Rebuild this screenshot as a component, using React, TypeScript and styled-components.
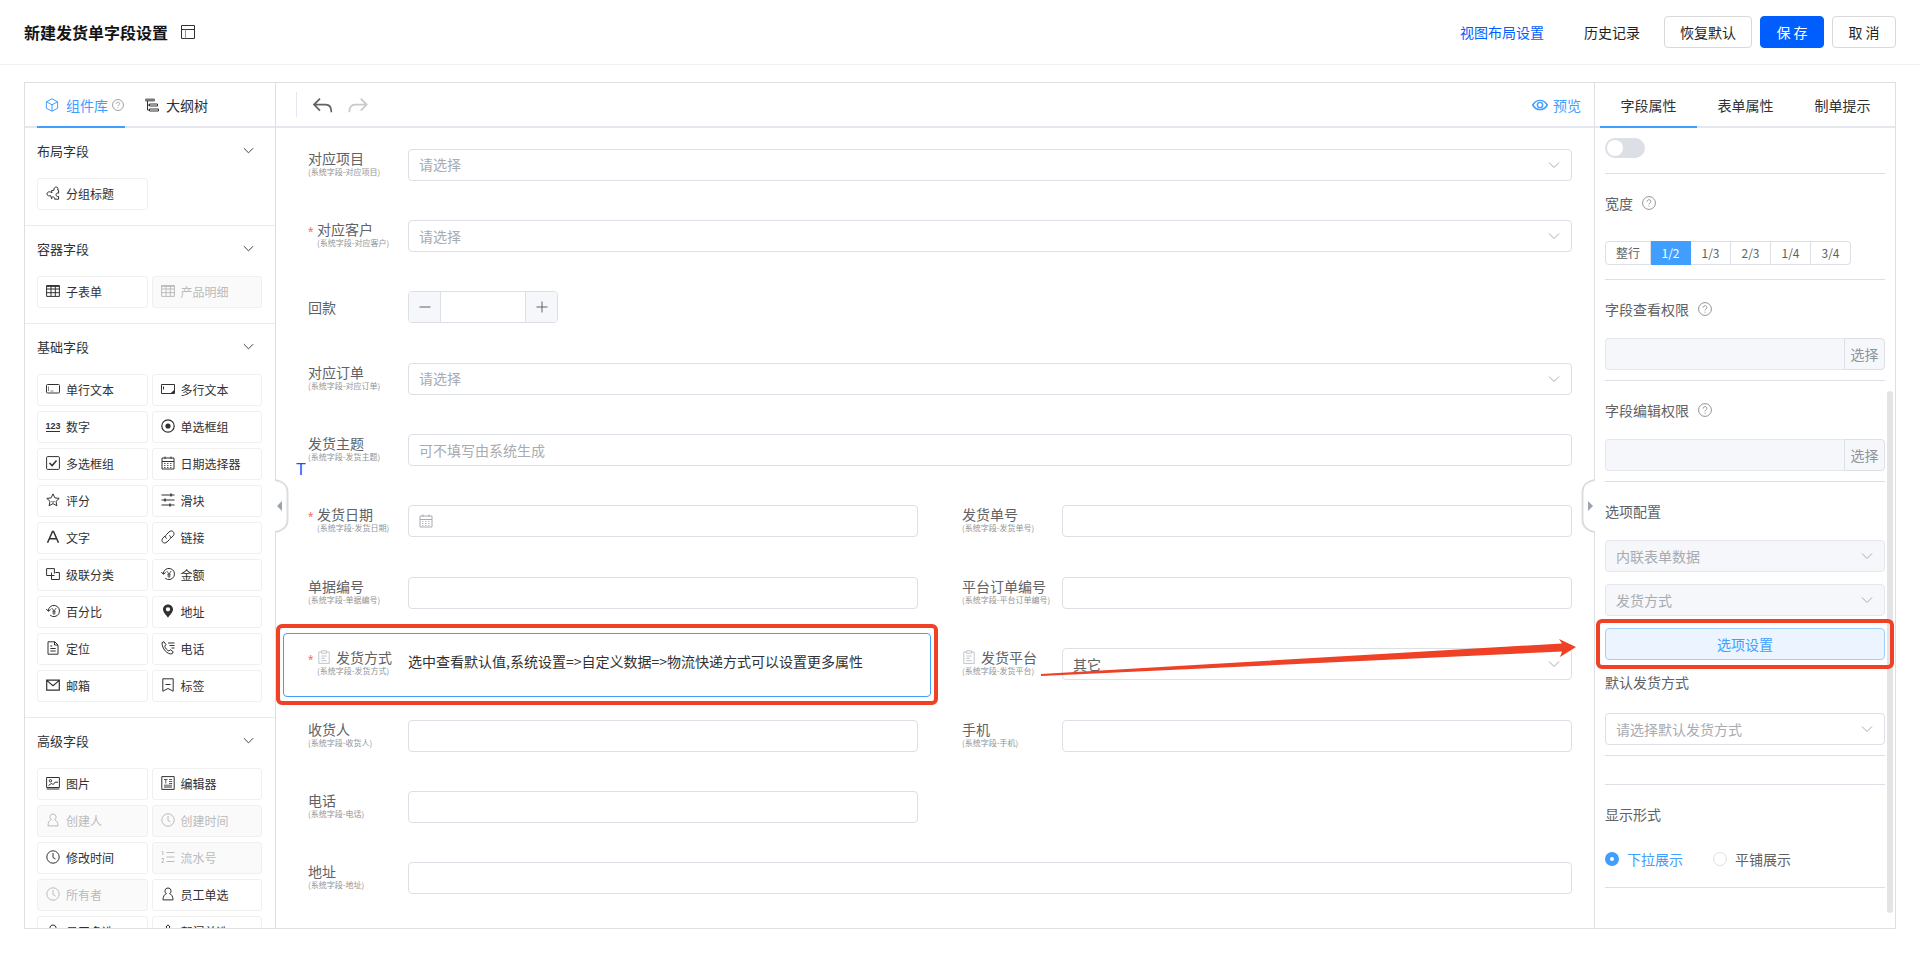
import React from "react";
import styled, { createGlobalStyle, css } from "styled-components";

const GlobalStyle = createGlobalStyle`
  *, *::before, *::after { box-sizing: border-box; }
  body {
    margin: 0;
    background: #fff;
    color: #303133;
    font-family: "Microsoft YaHei", "Noto Sans CJK SC", sans-serif;
    font-size: 14px;
  }
  button, input, select { font-family: inherit; font-size: 14px; margin: 0; }
  button { cursor: pointer; }
`;

const color = {
  primary: "#409eff",
  brand: "#005eff",
  text: "#303133",
  regular: "#606266",
  secondary: "#909399",
  placeholder: "#a8abb2",
  border: "#dcdfe6",
  line: "#dddfe2",
  light: "#f0f0f0",
  rule: "#e4e7ed",
  fill: "#f5f7fa",
  mark: "#ee4126",
};

/* ---------- icons ---------- */

const icons = {
  layout: <><path d="M.5.5h13v13H.5zM.5 4.500h13" /><path d="M4.500 4.500v9" stroke="#d77" /></>,
  cube: <path d="M7 .8l5.600 2.900v6.600L7 13.200l-5.600-2.900V3.700zM1.400 3.700L7 6.800l5.600-3.100M7 6.800v6.400" />,
  help: <><circle cx="7" cy="7" r="6.400" /><path d="M5.100 5.600c0-2.500 3.800-2.500 3.800-.1 0 1.500-1.900 1.500-1.900 2.900M7 9.700v1" /></>,
  tree: <><path d="M.5 1h9v2h-9z" fill="currentColor" opacity=".65" /><path d="M4.500 6h8v2h-8zM4.500 11h9v2h-9zM2.500 3v9h2M2.500 7h2" /></>,
  chevron: <path d="M2 4.500l5 5 5-5" />,
  blocks: <path d="M5.500 4.600L8 4.200C7.600 2 9 1 10.200 1c1.400 0 2.300 1.400 1.400 3l1 .2v3c-1.300-.6-2.600.2-2.600 1.600s1.300 2 2.600 1.500v2.900H8.700c.3-1.500-.7-2.300-1.700-2.300s-1.700.8-1.400 2M5.500 4.600L6 6.900C3.800 5 1 5.800 1 7.900S3.900 10.300 4.600 9.600l1.100 2.900" />,
  table: <><path d="M.6 1.600h12.800v10.800H.6zM.6 5h12.800M.6 8.700h12.800M5 1.600v10.800M9.300 1.600v10.800" /><path d="M.6 2.100h12.800" strokeWidth="1.600" /></>,
  input: <><rect x=".5" y="2.500" width="13" height="8.500" rx="1" /><path d="M2.500 4.500v4.500M4.500 9h3" opacity=".6" /></>,
  textarea: <><path d="M.5 2.500h13v9H.5zM2.500 4.500v3" /><path d="M13 8.500L10.500 11H13z" fill="currentColor" /></>,
  radio: <><circle cx="7" cy="7" r="6.200" strokeWidth="1.200" /><circle cx="7" cy="7" r="2.600" fill="currentColor" stroke="none" /></>,
  check: <><rect x=".6" y=".6" width="12.800" height="12.800" rx="1" /><path d="M3.500 7l2.700 2.600L10.500 4.500" strokeWidth="1.500" /></>,
  calendar: <><path d="M1 2h12v11H1zM1 5.500h12M4 .5V3M10 .5V3" /><path d="M3 7.500h8M3 9.500h8M3 11.500h8" strokeDasharray="1.500 1.500" strokeWidth=".8" /></>,
  star: <path d="M7 .9l1.900 4 4.300.5-3.200 3 .9 4.400L7 10.600l-3.900 2.200.9-4.400-3.200-3 4.300-.5zM5.500 8.500c1 .7 2 .7 3 0" />,
  slider: <><path d="M.5 2h13M.5 7h13M.5 12h13" strokeWidth="1.200" /><path d="M10 .5v3M4 5.500v3M9 10.500v3" strokeWidth="1.500" /></>,
  letter: <path d="M1.500 12.800L6.500 1.500h1l5 11.300M3.400 8.800h7.200" strokeWidth="1.500" />,
  link: <path d="M5.500 8.700C4 6.800 4.300 5.800 5.300 4.800L8 2c1.300-1.400 3.200-1.300 4.200-.3s1.200 2.900 0 4.100L10 8M8.500 5.300C10 7 9.700 8.300 8.700 9.300L6 12c-1.300 1.300-3.200 1.300-4.200.3s-1.200-2.900 0-4.200L4 6" />,
  cascade: <path d="M5 8.500H.6V1.600h7.800v5M5.500 5.500v7h7.900v-7h-4M5.500 8.500h3" />,
  money: <><path d="M2.300 7a5.600 5.600 0 1 1 1.900 4.200M.3 5l2 2.300L4.700 5.500" /><path d="M5.800 4L8 7l2.200-3M8 7v4M6.300 7.300h3.400M6.300 9h3.400" strokeWidth=".8" /></>,
  pin: <path d="M7 .5c2.900 0 5 2.200 5 4.800 0 3.100-3.400 6.200-5 8.400-1.600-2.200-5-5.300-5-8.400C2 2.700 4.100.5 7 .5zm0 2.700a2.100 2.100 0 1 0 0 4.300 2.100 2.100 0 0 0 0-4.300z" fill="currentColor" stroke="none" />,
  doc: <path d="M2 .8h6.800L12 4v9.200H2zM8.500.8V4H12M4.300 5h2M4.300 7.500h5.400M4.300 10h5.400" />,
  phone: <path d="M1 1.600l2-.9 2 3-1.300 1.500c.6 2 2.200 3.900 4.200 4.800l1.500-1.200 2.800 2-1 2C6.500 14 .8 7.500 1 1.600zM7 2h6.500M8.500 4.500h5M10.500 7h3" />,
  mail: <path d="M.7 2.200h12.600v9.900H.7zM1 2.600l6 5 6-5" strokeWidth="1.200" />,
  bookmark: <path d="M1.800.8h10.400v12.400L7 10.500l-5.200 2.700zM4.500 6.500h5" />,
  image: <><path d="M.6 1.500h12.800v10H.6z" /><circle cx="4.500" cy="4.800" r="1.200" /><path d="M2.500 9.500l3-2 1.800 1L9 6.200h3M.6 13h12.800" /></>,
  editor: <><path d="M.8.6h12.400v12.800H.8zM3 11h8" /><path d="M3 3.500h3.600M4.800 3.500v4M8 3.500h3.200M8 5.500h3.200M8 7.500h3.200M3 9.200h8" strokeWidth=".8" /></>,
  user: <path d="M7 1a3 3 0 0 1 1.600 5.600C10.800 7.400 12 9.600 12 12.900H2C2 9.600 3.200 7.400 5.400 6.600A3 3 0 0 1 7 1z" />,
  clock: <><circle cx="7" cy="7" r="6.200" /><path d="M7 3v4.500l2.500 1.500" /></>,
  list: <><path d="M5.500 2.500h8M5.500 7h8M5.500 11.500h8" /><path d="M.8 1.500h1V5M.6 8.500h1.800v2L.8 12.500h2" /></>,
  group: <path d="M7 .8l2 2.200-2 2-2-2zM7 5v3M2 13V8h10v5" />,
  clipboard: <path d="M4.500 2H1.800v11.400h10.400V2H9.500M4.500.8h5v2.400h-5zM4.300 6h5.400M4.300 8.300h3.500M4.300 10.700h5.400" />,
  minus: <path d="M1.500 7h11" />,
  plus: <path d="M1.500 7h11M7 1.500v11" />,
  undo: <path d="M5.600 2.500L1.400 6.700l4.200 4.200M1.600 6.700h8c2.700 0 4 2.200 4 5.300" strokeWidth="1.200" />,
  redo: <path d="M9.600 2.500l4.200 4.200-4.200 4.200M13.600 6.700H5.600c-2.700 0-4 2.200-4 5.300" strokeWidth="1.200" />,
  eye: <><path d="M.6 7c3.300-5.400 9.500-5.400 12.800 0-3.300 5.400-9.500 5.400-12.800 0z" strokeWidth="1.300" /><circle cx="7" cy="7" r="2.300" strokeWidth="1.300" /></>,
  number: <><text x="-.5" y="10" fontSize="9" fontWeight="700" fontFamily="Liberation Sans, sans-serif" fill="currentColor" stroke="none">123</text><path d="M0 12.500h14" /></>,
};
type IconName = keyof typeof icons;

const Svg = styled.svg<{ $size: number }>`
  width: ${(p) => p.$size}px;
  height: ${(p) => p.$size}px;
  flex: none;
  display: block;
  overflow: visible;
  fill: none;
  stroke: currentColor;
`;
const Icon = ({ name, size = 14 }: { name: IconName; size?: number }) => (
  <Svg $size={size} viewBox="0 0 14 14" aria-hidden="true">{icons[name]}</Svg>
);

/* ---------- page frame ---------- */

const Page = styled.div`
  display: flex;
  flex-direction: column;
  height: 100vh;
  min-height: 640px;
`;
const Header = styled.header`
  display: flex;
  align-items: center;
  height: 65px;
  flex: none;
  padding: 0 24px;
  border-bottom: 1px solid ${color.light};
`;
const Title = styled.h1`
  margin: 0 auto 0 0;
  display: flex;
  align-items: center;
  gap: 13px;
  font-size: 16px;
  line-height: 24px;
  font-weight: 700;
  color: #141414;
  svg { color: #333; }
`;
const Actions = styled.div`
  display: flex;
  gap: 8px;
`;
const TextLink = styled.a<{ $brand?: boolean }>`
  padding: 0 16px;
  line-height: 32px;
  text-decoration: none;
  color: ${(p) => (p.$brand ? color.brand : "#1f1f1f")};
`;
const HeaderButton = styled.button<{ $primary?: boolean }>`
  height: 32px;
  padding: 0 15px;
  min-width: 64px;
  white-space: nowrap;
  border: 1px solid ${(p) => (p.$primary ? color.brand : "#d9d9d9")};
  border-radius: 4px;
  background: ${(p) => (p.$primary ? color.brand : "#fff")};
  color: ${(p) => (p.$primary ? "#fff" : "#1f1f1f")};
`;
const Workspace = styled.main`
  flex: 1;
  min-height: 0;
  display: grid;
  grid-template-columns: 251px minmax(0, 1fr) 301px;
  margin: 17px 24px 24px;
  border: 1px solid ${color.line};
`;
const Pane = styled.section`
  display: flex;
  flex-direction: column;
  min-height: 0;
  min-width: 0;
  position: relative;
`;
const LeftPane = styled(Pane)`border-right: 1px solid ${color.line};`;
const RightPane = styled(Pane)`border-left: 1px solid ${color.line};`;

const Bar = styled.div`
  display: flex;
  height: 45px;
  flex: none;
  border-bottom: 2px solid ${color.rule};
`;
const LeftTabs = styled(Bar)`padding: 0 12px; gap: 20px;`;
const RightTabs = styled(Bar)`padding: 0 4px 0 5px;`;
const Tab = styled.button<{ $active?: boolean; $tinted?: boolean; $wide?: boolean }>`
  position: relative;
  display: flex;
  align-items: center;
  justify-content: center;
  gap: 7px;
  padding: 0;
  border: 0;
  background: none;
  color: ${(p) => (p.$tinted ? color.primary : color.text)};
  ${(p) => p.$wide && css`flex: 1;`}
  ${(p) => p.$tinted && css`padding: 0 1px 0 8px;`}
  ${(p) => p.$active && css`
    &::after {
      content: "";
      position: absolute;
      inset: auto 0 -2px;
      height: 2px;
      background: ${color.primary};
    }
  `}
`;
const TabHint = styled.span`
  margin-left: -3px;
  color: ${color.secondary};
`;

/* ---------- component library ---------- */

const Library = styled.div`
  flex: 1;
  min-height: 0;
  overflow-y: auto;
  scrollbar-width: none;
`;
const Group = styled.section`
  padding: 0 13px 15px 12px;
  border-bottom: 1px solid #ebebeb;
`;
const GroupTitle = styled.h2`
  margin: 0 0 4px;
  display: flex;
  align-items: center;
  justify-content: space-between;
  height: 46px;
  padding: 0 7px 2px 0;
  font-size: 13px;
  font-weight: 400;
`;
const GroupGrid = styled.div`
  display: grid;
  grid-template-columns: 1fr 1fr;
  gap: 5px 4px;
`;
const Chip = styled.button`
  display: flex;
  align-items: center;
  gap: 6px;
  height: 32px;
  padding: 0 8px 2px;
  border: 1px solid ${color.light};
  border-radius: 3px;
  background: #fff;
  color: ${color.text};
  font-size: 12px;
  &:disabled {
    background: #fafafa;
    color: #bbb;
  }
`;

type ChipData = [IconName, string, boolean?];
const library: { title: string; items: ChipData[] }[] = [
  { title: "布局字段", items: [["blocks", "分组标题"]] },
  { title: "容器字段", items: [["table", "子表单"], ["table", "产品明细", true]] },
  {
    title: "基础字段",
    items: [
      ["input", "单行文本"], ["textarea", "多行文本"],
      ["number", "数字"], ["radio", "单选框组"],
      ["check", "多选框组"], ["calendar", "日期选择器"],
      ["star", "评分"], ["slider", "滑块"],
      ["letter", "文字"], ["link", "链接"],
      ["cascade", "级联分类"], ["money", "金额"],
      ["money", "百分比"], ["pin", "地址"],
      ["doc", "定位"], ["phone", "电话"],
      ["mail", "邮箱"], ["bookmark", "标签"],
    ],
  },
  {
    title: "高级字段",
    items: [
      ["image", "图片"], ["editor", "编辑器"],
      ["user", "创建人", true], ["clock", "创建时间", true],
      ["clock", "修改时间"], ["list", "流水号", true],
      ["clock", "所有者", true], ["user", "员工单选"],
      ["user", "员工多选"], ["group", "部门单选"],
    ],
  },
];

/* ---------- shared controls ---------- */

const control = css`
  width: 100%;
  height: 32px;
  padding: 0 10px;
  border: 1px solid ${color.border};
  border-radius: 4px;
  background: #fff;
  color: ${color.regular};
  &:disabled { background: ${color.fill}; border-color: #e4e7ed; color: ${color.placeholder}; opacity: 1; }
`;
const TextInput = styled.input<{ $iconed?: boolean }>`
  ${control}
  ${(p) => p.$iconed && css`padding-left: 32px;`}
  &::placeholder { color: ${color.placeholder}; opacity: 1; }
`;
const NativeSelect = styled.select<{ $filled?: boolean }>`
  ${control}
  appearance: none;
  padding-bottom: 1px;
  ${(p) => !p.$filled && css`color: ${color.placeholder};`}
`;
const ControlWrap = styled.div`
  position: relative;
  flex: 1;
  min-width: 0;
`;
const Affix = styled.span<{ $start?: boolean }>`
  position: absolute;
  top: 9px;
  ${(p) => (p.$start ? "left: 11px;" : "right: 11px;")}
  color: ${color.placeholder};
  pointer-events: none;
`;
const Select = ({ id, value, filled, disabled, label }: {
  id: string; value: string; filled?: boolean; disabled?: boolean; label?: string;
}) => (
  <ControlWrap>
    <NativeSelect id={id} $filled={filled} disabled={disabled} aria-label={label}>
      <option>{value}</option>
    </NativeSelect>
    <Affix><Icon name="chevron" /></Affix>
  </ControlWrap>
);

/* ---------- form canvas ---------- */

const Toolbar = styled(Bar)`
  align-items: center;
  gap: 15px;
  padding: 0 13px 0 20px;
`;
const Separator = styled.span`
  width: 1px;
  height: 25px;
  background: ${color.rule};
`;
const ToolButton = styled.button<{ $accent?: boolean }>`
  display: flex;
  align-items: center;
  gap: 5px;
  padding: 0;
  border: 0;
  background: none;
  color: ${(p) => (p.$accent ? color.primary : color.regular)};
  ${(p) => p.$accent && css`margin-left: auto;`}
  &:disabled { color: #c8c9cc; }
`;
const Canvas = styled.form`
  flex: 1;
  min-height: 0;
  display: grid;
  grid-template-columns: 1fr 1fr;
  grid-auto-rows: minmax(64px, 1fr);
  align-items: center;
  column-gap: 6px;
  padding: 2px 9px 13px 7px;
`;
const Field = styled.div<{ $full?: boolean; $alone?: boolean; $selected?: boolean }>`
  position: relative;
  display: flex;
  align-items: center;
  height: 64px;
  padding: 0 12px 2px 24px;
  border: 1px solid ${(p) => (p.$selected ? color.primary : "transparent")};
  border-radius: 4px;
  ${(p) => p.$full && css`grid-column: 1 / -1;`}
  ${(p) => p.$alone && css`grid-column: 1;`}
`;
const FieldLabel = styled.label<{ $required?: boolean }>`
  position: relative;
  display: flex;
  flex-direction: column;
  width: 100px;
  flex: none;
  color: ${color.regular};
  line-height: 14px;
  white-space: nowrap;
  ${(p) => p.$required && css`
    padding-left: 9px;
    &::before {
      content: "*";
      position: absolute;
      left: 0;
      top: 3px;
      color: #f56c6c;
      font-family: "Liberation Sans", sans-serif;
      font-size: 14px;
    }
  `}
`;
const LabelText = styled.span`
  display: flex;
  align-items: center;
  gap: 5px;
  svg { color: #c0c4cc; }
`;
const LabelNote = styled.small`
  font-size: 8px;
  line-height: 14px;
  color: ${color.secondary};
`;
const Hint = styled.p`
  margin: 0 0 6px;
  line-height: 20px;
  color: ${color.text};
  white-space: nowrap;
`;
const Stepper = styled.div`
  display: flex;
  width: 150px;
  height: 32px;
  border: 1px solid ${color.border};
  border-radius: 4px;
  overflow: hidden;
`;
const StepInput = styled.input`
  flex: 1;
  min-width: 0;
  border: solid ${color.border};
  border-width: 0 1px;
  text-align: center;
`;
const StepButton = styled.button`
  display: flex;
  align-items: center;
  justify-content: center;
  width: 31px;
  padding: 0;
  border: 0;
  background: ${color.fill};
  color: ${color.regular};
`;

type FieldKind = "select" | "text" | "date" | "number" | "hint";
type FieldData = {
  id: string; label: string; kind: FieldKind; value?: string; noNote?: boolean;
  required?: boolean; full?: boolean; alone?: boolean; marked?: boolean; selected?: boolean; filled?: boolean;
};
const fields: FieldData[] = [
  { id: "project", label: "对应项目", kind: "select", value: "请选择", full: true },
  { id: "customer", label: "对应客户", kind: "select", value: "请选择", full: true, required: true },
  { id: "payment", label: "回款", kind: "number", full: true, noNote: true },
  { id: "order", label: "对应订单", kind: "select", value: "请选择", full: true },
  { id: "subject", label: "发货主题", kind: "text", value: "可不填写由系统生成", full: true },
  { id: "date", label: "发货日期", kind: "date", required: true },
  { id: "shipno", label: "发货单号", kind: "text" },
  { id: "docno", label: "单据编号", kind: "text" },
  { id: "platno", label: "平台订单编号", kind: "text" },
  { id: "method", label: "发货方式", kind: "hint", value: "选中查看默认值,系统设置=>自定义数据=>物流快递方式可以设置更多属性", required: true, marked: true, selected: true },
  { id: "platform", label: "发货平台", kind: "select", value: "其它", marked: true, filled: true },
  { id: "receiver", label: "收货人", kind: "text" },
  { id: "mobile", label: "手机", kind: "text" },
  { id: "tel", label: "电话", kind: "text", alone: true },
  { id: "address", label: "地址", kind: "text", full: true },
];

const FieldControl = ({ f }: { f: FieldData }) => {
  switch (f.kind) {
    case "select":
      return <Select id={f.id} value={f.value ?? ""} filled={f.filled} />;
    case "number":
      return (
        <Stepper>
          <StepButton type="button" aria-label="减少"><Icon name="minus" /></StepButton>
          <StepInput id={f.id} type="text" inputMode="numeric" />
          <StepButton type="button" aria-label="增加"><Icon name="plus" /></StepButton>
        </Stepper>
      );
    case "date":
      return (
        <ControlWrap>
          <Affix $start><Icon name="calendar" /></Affix>
          <TextInput id={f.id} $iconed />
        </ControlWrap>
      );
    case "hint":
      return <Hint id={f.id}>{f.value}</Hint>;
    default:
      return <ControlWrap><TextInput id={f.id} placeholder={f.value} /></ControlWrap>;
  }
};

/* ---------- property panel ---------- */

const Props = styled.div`
  flex: 1;
  min-height: 0;
  overflow-y: auto;
  scrollbar-width: none;
  padding: 0 10px;
`;
const Block = styled.div`
  padding: 14px 0 10px;
  border-bottom: 1px solid ${color.border};
`;
const SwitchBlock = styled(Block)`padding: 10px 0 15px;`;
const EmptyBlock = styled(Block)`padding: 0; height: 29px;`;
const Stack = styled.div`
  display: flex;
  flex-direction: column;
  gap: 12px;
  margin-top: 12px;
`;
const BlockLabel = styled.label`
  display: flex;
  align-items: center;
  gap: 9px;
  height: 32px;
  padding-bottom: 3px;
  color: ${color.regular};
  svg { color: ${color.secondary}; }
`;
const NextLabel = styled(BlockLabel)`margin: 7px 0 14px;`;
const Switch = styled.input`
  appearance: none;
  display: block;
  margin: 0;
  width: 40px;
  height: 20px;
  border-radius: 10px;
  background: ${color.border};
  &::before {
    content: "";
    display: block;
    width: 16px;
    height: 16px;
    margin: 2px;
    border-radius: 50%;
    background: #fff;
  }
`;
const Segments = styled.div`
  display: flex;
  padding: 9px 0 4px;
`;
const Segment = styled.button<{ $active?: boolean }>`
  height: 24px;
  min-width: 40px;
  padding: 0 10px;
  border: 1px solid ${(p) => (p.$active ? color.primary : color.border)};
  border-left-width: 0;
  background: ${(p) => (p.$active ? color.primary : "#fff")};
  color: ${(p) => (p.$active ? "#fff" : color.regular)};
  font-size: 12px;
  line-height: 22px;
  &:first-child { border-left-width: 1px; border-radius: 4px 0 0 4px; }
  &:last-child { border-radius: 0 4px 4px 0; }
`;
const Picker = styled.div`
  display: flex;
  input { border-radius: 4px 0 0 4px; border-right: 0; flex: 1; min-width: 0; }
`;
const PickerButton = styled.button`
  width: 41px;
  height: 32px;
  padding: 0;
  border: 1px solid ${color.border};
  border-radius: 0 4px 4px 0;
  background: ${color.fill};
  color: ${color.secondary};
`;
const OptionButton = styled.button`
  display: block;
  height: 32px;
  width: 100%;
  padding-bottom: 2px;
  border: 1px solid #a0cfff;
  border-radius: 4px;
  background: #ecf5ff;
  color: ${color.primary};
`;
const Marked = styled.div`position: relative;`;
const Mark = styled.span<{ $inset: string }>`
  position: absolute;
  inset: ${(p) => p.$inset};
  border: 4px solid ${color.mark};
  border-radius: 6px;
  pointer-events: none;
  z-index: 3;
`;
const RadioRow = styled.div`
  display: flex;
  gap: 30px;
  height: 32px;
  margin-top: 12px;
`;
const RadioBlock = styled(Block)`padding-bottom: 12px;`;
const RadioLabel = styled.label`
  display: flex;
  align-items: center;
  gap: 8px;
  padding-bottom: 1px;
  color: ${color.regular};
  &:has(:checked) { color: ${color.primary}; }
`;
const Radio = styled.input`
  appearance: none;
  width: 14px;
  height: 14px;
  margin: 0;
  border: 1px solid ${color.border};
  border-radius: 50%;
  &:checked { border: 5px solid ${color.primary}; }
`;
const ScrollThumb = styled.span`
  position: absolute;
  top: 308px;
  bottom: 15px;
  right: 2px;
  width: 6px;
  border-radius: 3px;
  background: #e3e4e6;
`;

/* ---------- overlays on the canvas ---------- */

const Handle = styled.button<{ $side: "left" | "right" }>`
  position: absolute;
  top: 396px;
  width: 14px;
  height: 54px;
  padding: 0;
  border: 0;
  background: none;
  z-index: 2;
  ${(p) => (p.$side === "left" ? "left: -1px;" : "right: -1px; transform: scaleX(-1);")}
  svg { display: block; }
`;
const CollapseHandle = ({ side, label }: { side: "left" | "right"; label: string }) => (
  <Handle type="button" $side={side} aria-label={label}>
    <svg width="14" height="54" viewBox="0 0 14 54" aria-hidden="true">
      <path d="M0 1C7 2 12.500 6 12.500 13v28c0 7-5.500 11-12.500 12" fill="#fff" stroke="#dcdde0" strokeWidth="2" />
      <path d="M7 22v10L2 27z" fill="#9aa3b0" />
    </svg>
  </Handle>
);
const StrayLetter = styled.span`
  position: absolute;
  left: 20px;
  top: 377px;
  color: ${color.brand};
  font: 16px/20px "Liberation Sans", sans-serif;
`;
const Arrow = styled.svg`
  position: absolute;
  right: 18px;
  top: 555px;
  width: 535px;
  height: 40px;
  pointer-events: none;
  z-index: 3;
`;

const selectedMark = "-10px -8px -9px";

export default function App() {
  return (
    <Page>
      <GlobalStyle />
      <Header>
        <Title>新建发货单字段设置 <Icon name="layout" /></Title>
        <Actions>
          <TextLink href="#layout" $brand>视图布局设置</TextLink>
          <TextLink href="#history">历史记录</TextLink>
          <HeaderButton type="button">恢复默认</HeaderButton>
          <HeaderButton type="button" $primary>保 存</HeaderButton>
          <HeaderButton type="button">取 消</HeaderButton>
        </Actions>
      </Header>
      <Workspace>
        <LeftPane>
          <LeftTabs role="tablist">
            <Tab type="button" role="tab" aria-selected $active $tinted>
              <Icon name="cube" />组件库<TabHint><Icon name="help" size={12} /></TabHint>
            </Tab>
            <Tab type="button" role="tab"><Icon name="tree" />大纲树</Tab>
          </LeftTabs>
          <Library>
            {library.map((g) => (
              <Group key={g.title}>
                <GroupTitle>{g.title}<Icon name="chevron" size={13} /></GroupTitle>
                <GroupGrid>
                  {g.items.map(([icon, text, off]) => (
                    <Chip key={text} type="button" disabled={off}><Icon name={icon} />{text}</Chip>
                  ))}
                </GroupGrid>
              </Group>
            ))}
          </Library>
        </LeftPane>

        <Pane>
          <Toolbar>
            <Separator />
            <ToolButton type="button" aria-label="撤销"><Icon name="undo" size={20} /></ToolButton>
            <ToolButton type="button" aria-label="重做" disabled><Icon name="redo" size={20} /></ToolButton>
            <ToolButton type="button" $accent><Icon name="eye" size={16} />预览</ToolButton>
          </Toolbar>
          <Canvas>
            {fields.map((f) => (
              <Field key={f.id} $full={f.full} $alone={f.alone} $selected={f.selected}>
                <FieldLabel
                  as={f.kind === "hint" ? "span" : "label"}
                  htmlFor={f.kind === "hint" ? undefined : f.id}
                  $required={f.required}
                >
                  <LabelText>{f.marked && <Icon name="clipboard" />}{f.label}</LabelText>
                  {!f.noNote && <LabelNote>(系统字段-{f.label})</LabelNote>}
                </FieldLabel>
                <FieldControl f={f} />
                {f.selected && <Mark $inset={selectedMark} />}
              </Field>
            ))}
          </Canvas>
          <StrayLetter>T</StrayLetter>
          <CollapseHandle side="left" label="收起组件库" />
          <CollapseHandle side="right" label="收起属性栏" />
          <Arrow viewBox="0 0 535 40" aria-hidden="true">
            <path d="M0 36L521 5.500 518 1l17 8-16 10 2-5.500L0 38z" fill={color.mark} />
          </Arrow>
        </Pane>

        <RightPane>
          <RightTabs role="tablist">
            <Tab type="button" role="tab" aria-selected $active $wide>字段属性</Tab>
            <Tab type="button" role="tab" $wide>表单属性</Tab>
            <Tab type="button" role="tab" $wide>制单提示</Tab>
          </RightTabs>
          <Props>
            <SwitchBlock><Switch type="checkbox" role="switch" aria-label="启用" /></SwitchBlock>
            <Block>
              <BlockLabel as="div">宽度<Icon name="help" /></BlockLabel>
              <Stack>
                <Segments>
                  {["整行", "1/2", "1/3", "2/3", "1/4", "3/4"].map((s) => (
                    <Segment key={s} type="button" $active={s === "1/2"}>{s}</Segment>
                  ))}
                </Segments>
              </Stack>
            </Block>
            {[["view", "字段查看权限"], ["edit", "字段编辑权限"]].map(([id, text]) => (
              <Block key={id}>
                <BlockLabel htmlFor={id}>{text}<Icon name="help" /></BlockLabel>
                <Stack>
                  <Picker>
                    <TextInput id={id} disabled />
                    <PickerButton type="button">选择</PickerButton>
                  </Picker>
                </Stack>
              </Block>
            ))}
            <Block>
              <BlockLabel htmlFor="source">选项配置</BlockLabel>
              <Stack>
                <Select id="source" value="内联表单数据" disabled />
                <Select id="source-field" value="发货方式" disabled label="数据字段" />
                <Marked>
                  <OptionButton type="button">选项设置</OptionButton>
                  <Mark $inset="-9px" />
                </Marked>
              </Stack>
              <NextLabel htmlFor="fallback">默认发货方式</NextLabel>
              <Select id="fallback" value="请选择默认发货方式" />
            </Block>
            <EmptyBlock />
            <RadioBlock>
              <BlockLabel as="div">显示形式</BlockLabel>
              <RadioRow>
                <RadioLabel><Radio type="radio" name="display" defaultChecked />下拉展示</RadioLabel>
                <RadioLabel><Radio type="radio" name="display" />平铺展示</RadioLabel>
              </RadioRow>
            </RadioBlock>
          </Props>
          <ScrollThumb />
        </RightPane>
      </Workspace>
    </Page>
  );
}
